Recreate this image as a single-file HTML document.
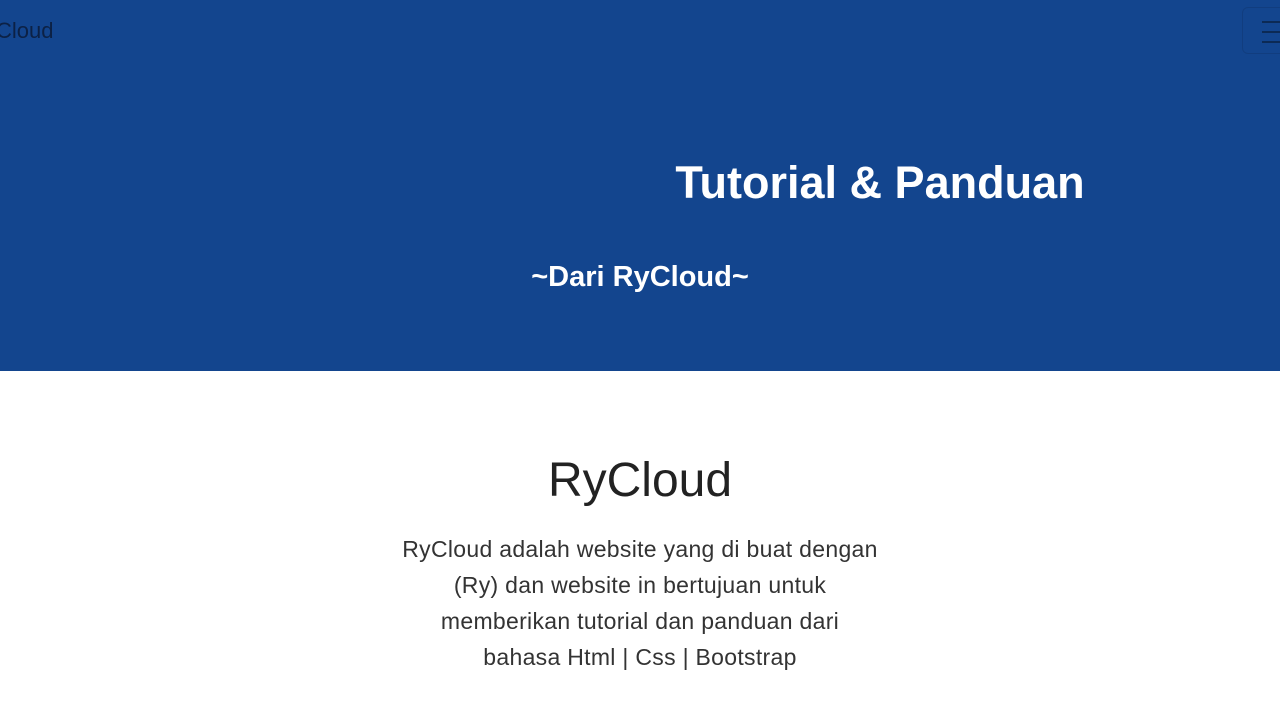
<!DOCTYPE html>
<html><head><style>
body{margin:0;width:1280px;height:720px;overflow:hidden;font-family:"Liberation Sans",sans-serif;background:#fff}
.hero{position:relative;height:371px;background:#13458e}
.brand{position:absolute;left:-4px;top:18px;font-size:22px;color:#0c2145}
.btn{position:absolute;left:1242px;top:7px;width:60px;height:45px;border:1px solid rgba(0,0,0,.1);border-radius:6px}
.btn i{position:absolute;left:19px;width:30px;height:2px;background:#0c2a55}
h1{position:absolute;left:0;width:1760px;top:157px;margin:0;text-align:center;color:#fff;font-size:45px;font-weight:bold}
h2{position:absolute;left:0;width:1280px;top:261px;margin:0;text-align:center;color:#fff;font-size:29px;font-weight:bold}
h3{margin:0;position:absolute;top:453px;width:1280px;text-align:center;font-size:48px;font-weight:normal;color:#222}
p{position:absolute;top:531px;left:340px;width:600px;margin:0;text-align:center;font-size:23px;letter-spacing:0.3px;line-height:36px;color:#333}
</style></head><body>
<div class="hero">
<div class="brand">Cloud</div>
<div class="btn"><i style="top:13px"></i><i style="top:23px"></i><i style="top:33px"></i></div>
<h1>Tutorial &amp; Panduan</h1>
<h2>~Dari RyCloud~</h2>
</div>
<h3>RyCloud</h3>
<p>RyCloud adalah website yang di buat dengan<br>(Ry) dan website in bertujuan untuk<br>memberikan tutorial dan panduan dari<br>bahasa Html | Css | Bootstrap</p>
</body></html>
